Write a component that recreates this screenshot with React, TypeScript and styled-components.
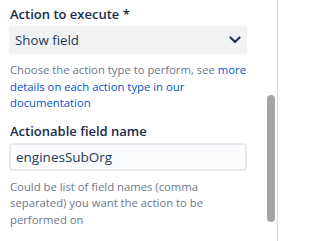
import React from 'react'
import styled, { createGlobalStyle } from 'styled-components'

const GlobalStyle = createGlobalStyle`
    html, body {
        margin: 0;
        padding: 0;
        background: #ffffff;
    }
    body {
        font-family: "Open Sans", "Noto Sans", sans-serif;
        color: #172B4D;
    }
`

const Page = styled.div`
    display: flex;
    width: 292px;
    height: 241px;
    overflow: hidden;
`

const Panel = styled.div`
    display: flex;
    width: 277px;
    height: 241px;
    border-right: 1px solid #d9d9d9;
`

const Content = styled.div`
    flex: 1;
    padding: 4px 0 0 9px;
    display: flex;
    flex-direction: column;
`

const Field = styled.div`
    width: 238px;
    display: flex;
    flex-direction: column;
    margin-bottom: 9px;
`

const Label = styled.label`
    font-size: 13px;
    font-weight: 600;
    line-height: 20px;
    color: #172B4D;
    padding-left: 1px;
    margin-bottom: 2px;
`

const Select = styled.div`
    height: 28px;
    box-sizing: border-box;
    background: #F1F2F4;
    border-radius: 3px;
    display: flex;
    align-items: center;
    justify-content: space-between;
    padding: 0 6px 0 6px;
    font-size: 13.3px;
    color: #253858;
`

const TextInput = styled.div`
    height: 28px;
    box-sizing: border-box;
    background: #FAFBFC;
    border: 2px solid #E8EAED;
    border-radius: 3px;
    display: flex;
    align-items: center;
    padding: 0 5px;
    font-size: 13.5px;
    color: #253858;
`

const Help = styled.p`
    margin: 8px 0 0 1px;
    font-size: 11.3px;
    line-height: 16.5px;
    color: #6B778C;
`

const Link = styled.a`
    color: #0052CC;
    text-decoration: none;
`

const Track = styled.div`
    width: 11px;
    display: flex;
    flex-direction: column;
`

const Thumb = styled.div`
    margin: 95px 2px 0 0;
    width: 8px;
    height: 127px;
    border-radius: 4px;
    background: #A5A5A5;
    align-self: flex-end;
`

const Chevron = () => (
    <svg width="12" height="8" viewBox="0 0 12 8" fill="none">
        <path d="M1.5 1.5 L6 6 L10.5 1.5" stroke="#253858" strokeWidth="2.2" strokeLinecap="round" strokeLinejoin="round" />
    </svg>
)

export default function App() {
    return (
        <Page>
            <GlobalStyle />
            <Panel>
                <Content>
                    <Field>
                        <Label>Action to execute *</Label>
                        <Select>
                            <span>Show field</span>
                            <Chevron />
                        </Select>
                        <Help>
                            Choose the action type to perform, see{' '}
                            <Link>more details on each action type in our documentation</Link>
                        </Help>
                    </Field>
                    <Field>
                        <Label>Actionable field name</Label>
                        <TextInput>enginesSubOrg</TextInput>
                        <Help>Could be list of field names (comma separated) you want the action to be performed on</Help>
                    </Field>
                </Content>
                <Track>
                    <Thumb />
                </Track>
            </Panel>
        </Page>
    )
}
